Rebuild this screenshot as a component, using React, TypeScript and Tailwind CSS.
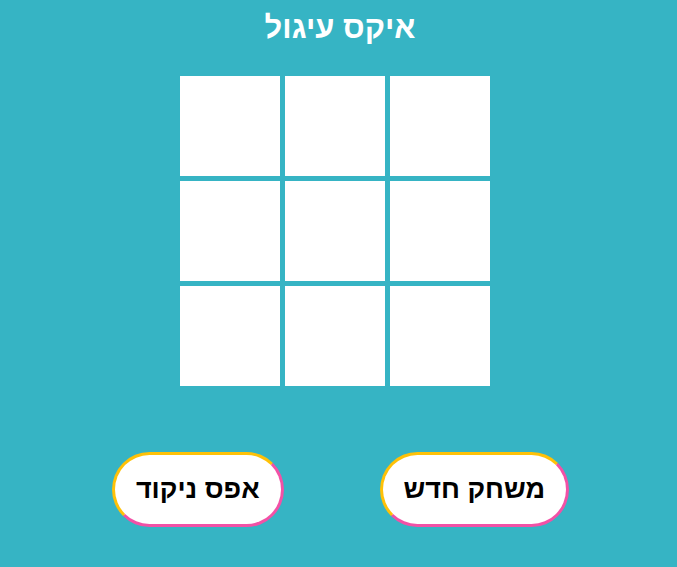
import React from "react";

export default function App() {
  const cells = Array.from({ length: 9 });
  const btn =
    "h-[75px] px-[21px] rounded-full bg-white border-[3px] border-t-[#ffc107] border-l-[#ffc107] border-b-[#f251a6] border-r-[#f251a6] text-[27px] leading-none font-bold text-black";
  return (
    <div
      dir="rtl"
      className="w-[677px] h-[567px] bg-[#36b4c4] flex flex-col items-center"
      style={{ fontFamily: '"Liberation Sans", Arial, sans-serif' }}
    >
      <h1 className="mt-[10px] h-[36px] text-[31px] leading-[36px] font-bold text-white pl-[3px]">
        איקס עיגול
      </h1>
      <div className="mt-[30px] grid grid-cols-[100px_100px_100px] grid-rows-[100px_100px_100px] gap-[5px] ml-[-7px]">
        {cells.map((_, i) => (
          <div key={i} className="bg-white" />
        ))}
      </div>
      <div className="mt-[66px] flex gap-[96px] pl-[4px]">
        <button className={btn}>משחק חדש</button>
        <button className={btn}>אפס ניקוד</button>
      </div>
    </div>
  );
}
